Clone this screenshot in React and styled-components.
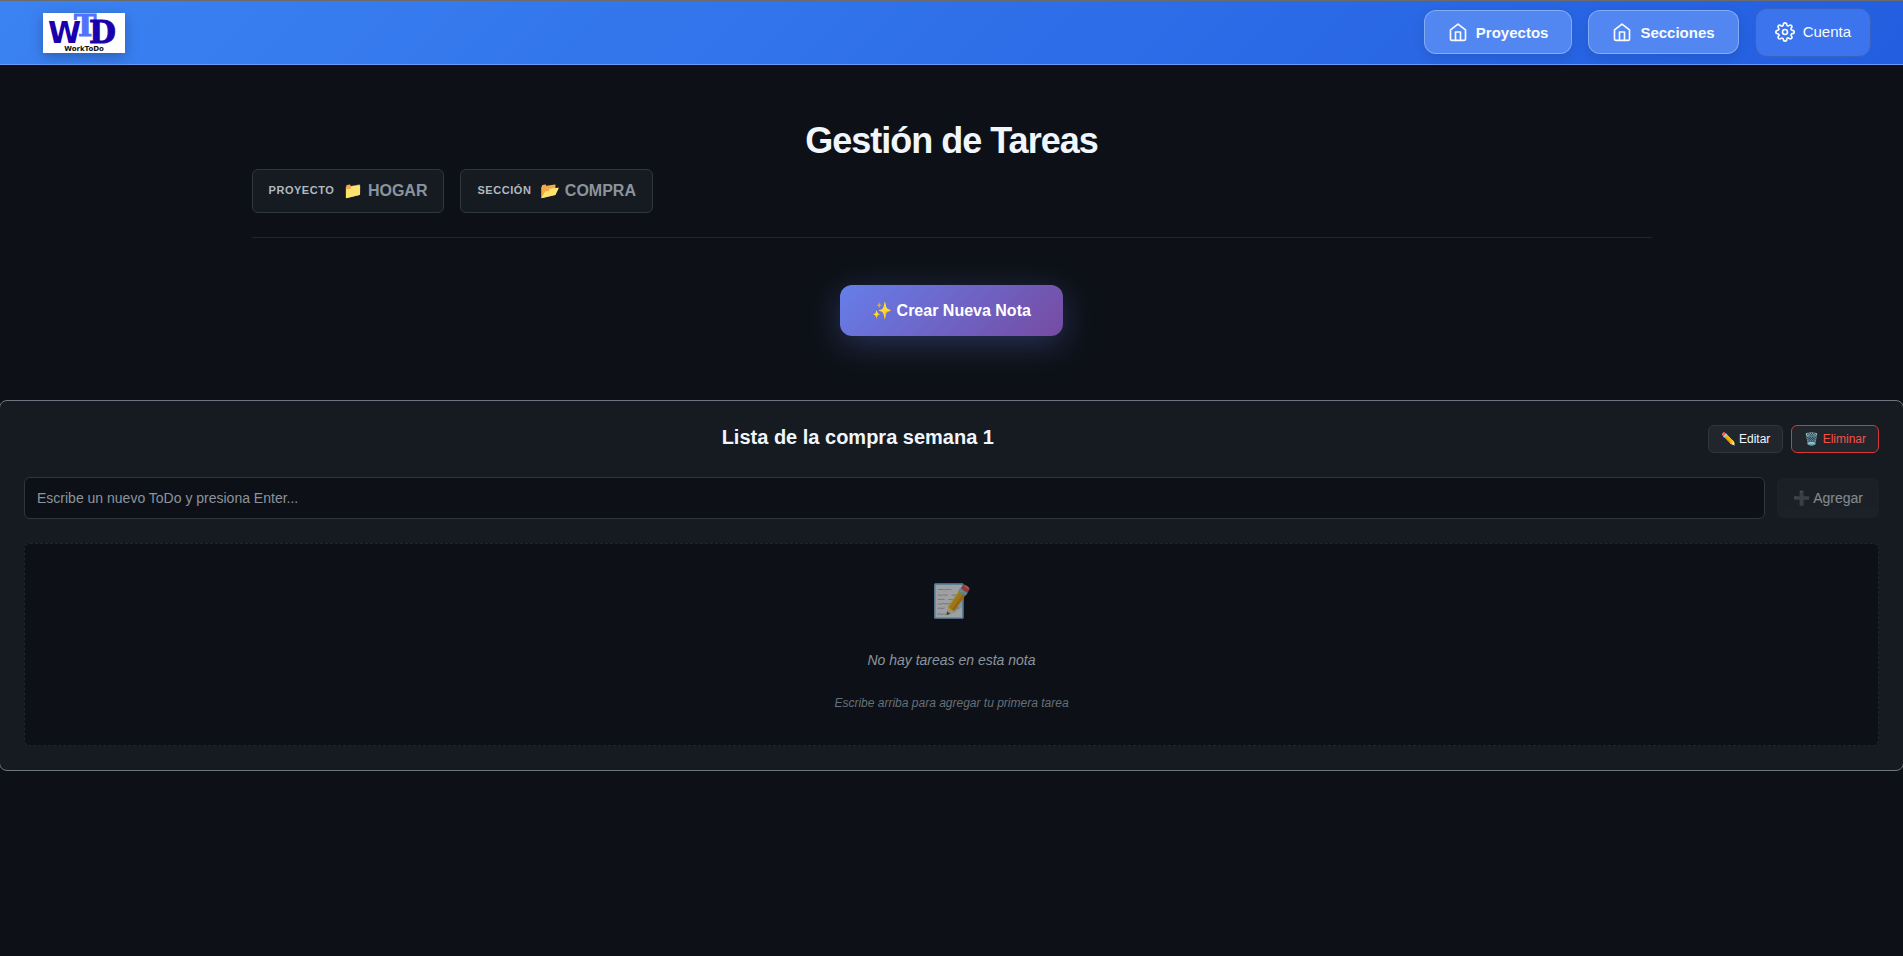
import React, { useState } from "react";
import styled, { createGlobalStyle, css } from "styled-components";

const GlobalStyle = createGlobalStyle`
  *, *::before, *::after { box-sizing: border-box; }
  body {
    margin: 0;
    overflow-x: hidden;
    color: #f0f6fc;
    font-family: "Liberation Sans", Arial, sans-serif;
    font-size: 16px;
  }
  button, input { font-family: inherit; }
`;

const Page = styled.div`
  min-height: 100vh;
  background: #0d1117;
`;

const Header = styled.header`
  display: flex;
  align-items: center;
  justify-content: space-between;
  height: 65px;
  padding: 0 32px 0 43px;
  background: linear-gradient(135deg, #3b82f2 0%, #235ee0 100%);
  border-top: 1px solid #6b6b6b;
  border-bottom: 1px solid #6a9af5;
`;

const LogoLink = styled.a`
  display: block;
  height: 40px;
  box-shadow: 0 4px 12px rgba(0, 0, 0, 0.25);

  svg { display: block; }
`;

const Nav = styled.nav`
  display: flex;
  align-items: center;
  gap: 16px;
  padding-bottom: 1px;
`;

const NavButton = styled.button`
  display: flex;
  align-items: center;
  gap: 8px;
  height: 44px;
  padding: 0 23px;
  border: 1px solid rgba(255, 255, 255, 0.3);
  border-radius: 12px;
  background: #5287f1;
  box-shadow: 0 4px 12px rgba(0, 0, 0, 0.1);
  color: #f8fafc;
  font-size: 15px;
  font-weight: 600;
  cursor: pointer;

  ${({ $quiet }) => $quiet && css`
    height: 49px;
    padding: 0 19px 1px;
    border-color: #3862c0;
    background: #3b74ed;
    box-shadow: none;
    font-weight: 400;
  `}
`;

const Icon = styled.svg.attrs({
  viewBox: "0 0 24 24",
  width: 20,
  height: 20,
  fill: "none",
  stroke: "currentColor",
  strokeWidth: 2,
  strokeLinecap: "round",
  strokeLinejoin: "round",
  "aria-hidden": true,
})``;

const Intro = styled.section`
  max-width: 1400px;
  margin: 0 auto;
  padding-top: 54px;
`;

const Title = styled.h1`
  margin: 0;
  font-size: 36px;
  font-weight: 700;
  line-height: 44px;
  letter-spacing: -1px;
  text-align: center;
`;

const Crumbs = styled.div`
  display: flex;
  gap: 16px;
  margin-top: 6px;
  padding-bottom: 24px;
  border-bottom: 1px solid #21262d;
`;

const Crumb = styled.div`
  display: flex;
  align-items: center;
  gap: 9px;
  height: 44px;
  padding: 0 16px 2px;
  border: 1px solid #30363d;
  border-radius: 6px;
  background: #161b22;
`;

const CrumbLabel = styled.span`
  color: #b1b8c0;
  font-size: 11px;
  font-weight: 600;
  letter-spacing: 0.05em;
  text-transform: uppercase;
`;

const CrumbValue = styled.span`
  color: #8b949e;
  font-weight: 600;
  text-transform: uppercase;
`;

const CreateRow = styled.div`
  display: flex;
  justify-content: center;
  padding: 47px 0 64px;
`;

const CreateButton = styled.button`
  height: 51px;
  padding: 0 32px;
  border: 0;
  border-radius: 12px;
  background: linear-gradient(135deg, #667eea 0%, #764ba2 100%);
  box-shadow: 0 8px 32px rgba(102, 126, 234, 0.3);
  color: #fff;
  font-size: 16px;
  font-weight: 600;
  cursor: pointer;
`;

const Note = styled.article`
  margin: 0 -1px;
  padding: 24px;
  border: 1px solid #6e7681;
  border-radius: 8px;
  background: #161b22;
`;

const NoteHeader = styled.div`
  display: flex;
  align-items: flex-start;
  gap: 16px;
  height: 52px;
`;

const NoteTitle = styled.h2`
  flex: 1;
  margin: 0;
  font-size: 20px;
  font-weight: 600;
  line-height: 24px;
  text-align: center;
`;

const Actions = styled.div`
  display: flex;
  gap: 8px;
`;

const SmallButton = styled.button`
  height: 28px;
  padding: 0 12px;
  border: 1px solid ${({ $danger }) => ($danger ? "#da3633" : "#30363d")};
  border-radius: 6px;
  background: #21262d;
  color: ${({ $danger }) => ($danger ? "#f85149" : "#f0f6fc")};
  font-size: 12px;
  cursor: pointer;
`;

const AddForm = styled.form`
  display: flex;
  align-items: center;
  gap: 12px;
`;

const TodoInput = styled.input`
  flex: 1;
  min-width: 0;
  height: 42px;
  padding: 0 12px;
  border: 1px solid #30363d;
  border-radius: 6px;
  outline: none;
  background: #0d1117;
  color: #f0f6fc;
  font-size: 14px;

  &::placeholder { color: #8b949e; opacity: 1; }
`;

const AddButton = styled.button`
  height: 40px;
  padding: 0 16px;
  border: 0;
  border-radius: 6px;
  background: #21262d;
  color: #f0f6fc;
  font-size: 14px;
  opacity: 0.5;
`;

const Empty = styled.div`
  display: flex;
  flex-direction: column;
  align-items: center;
  margin-top: 24px;
  padding: 32px 0;
  border: 1px dashed #21262d;
  border-radius: 6px;
  background: #0d1117;
  font-style: italic;
`;

const EmptyIcon = styled.span`
  font-size: 32px;
  font-style: normal;
  line-height: 50px;
  opacity: 0.6;
`;

const EmptyText = styled.p`
  margin: 22px 0 0;
  color: #8b949e;
  font-size: 14px;
  line-height: 24px;
`;

const EmptyHint = styled.p`
  margin: 21px 0 0;
  color: #686f79;
  font-size: 12px;
  line-height: 20px;
`;

function Logo() {
  return (
    <svg width="82" height="40" viewBox="0 0 82 40" role="img" aria-label="WorkToDo">
      <rect width="82" height="40" fill="#fff" />
      <text x="5" y="30" fontSize="30" fontWeight="700" fontFamily="'DejaVu Sans', sans-serif" fill="#1a00ad">
        W
        <tspan x="31" y="23" fontFamily="'DejaVu Serif', serif" fill="#5271ff" stroke="#5271ff">T</tspan>
        <tspan x="46" y="30" fontSize="31" fontFamily="'DejaVu Serif', serif" stroke="#1a00ad">D</tspan>
      </text>
      <text x="41" y="38" fontSize="7" fontWeight="700" fontFamily="'DejaVu Sans', sans-serif" fill="#111" textAnchor="middle">
        WorkToDo
      </text>
    </svg>
  );
}

function HomeIcon() {
  return (
    <Icon>
      <path d="M3 9.5 12 2.5l9 7V20a2 2 0 0 1-2 2H5a2 2 0 0 1-2-2z" />
      <path d="M9 22V12h6v10" />
    </Icon>
  );
}

function GearIcon() {
  return (
    <Icon>
      <circle cx="12" cy="12" r="3" />
      <path d="M19.4 15a1.65 1.65 0 0 0 .33 1.82l.06.06a2 2 0 0 1 0 2.83 2 2 0 0 1-2.83 0l-.06-.06a1.65 1.65 0 0 0-1.82-.33 1.65 1.65 0 0 0-1 1.51V21a2 2 0 0 1-2 2 2 2 0 0 1-2-2v-.09A1.65 1.65 0 0 0 9 19.4a1.65 1.65 0 0 0-1.82.33l-.06.06a2 2 0 0 1-2.83 0 2 2 0 0 1 0-2.83l.06-.06a1.65 1.65 0 0 0 .33-1.82 1.65 1.65 0 0 0-1.51-1H3a2 2 0 0 1-2-2 2 2 0 0 1 2-2h.09A1.65 1.65 0 0 0 4.6 9a1.65 1.65 0 0 0-.33-1.82l-.06-.06a2 2 0 0 1 0-2.83 2 2 0 0 1 2.83 0l.06.06a1.65 1.65 0 0 0 1.82.33H9a1.65 1.65 0 0 0 1-1.51V3a2 2 0 0 1 2-2 2 2 0 0 1 2 2v.09a1.65 1.65 0 0 0 1 1.51 1.65 1.65 0 0 0 1.82-.33l.06-.06a2 2 0 0 1 2.83 0 2 2 0 0 1 0 2.83l-.06.06a1.65 1.65 0 0 0-.33 1.82V9a1.65 1.65 0 0 0 1.51 1H21a2 2 0 0 1 2 2 2 2 0 0 1-2 2h-.09a1.65 1.65 0 0 0-1.51 1z" />
    </Icon>
  );
}

export default function App() {
  const [todo, setTodo] = useState("");

  return (
    <>
      <GlobalStyle />
      <Page>
        <Header>
          <LogoLink href="#"><Logo /></LogoLink>
          <Nav>
            <NavButton type="button"><HomeIcon />Proyectos</NavButton>
            <NavButton type="button"><HomeIcon />Secciones</NavButton>
            <NavButton type="button" $quiet><GearIcon />Cuenta</NavButton>
          </Nav>
        </Header>
        <main>
          <Intro>
            <Title>Gestión de Tareas</Title>
            <Crumbs>
              <Crumb>
                <CrumbLabel>Proyecto</CrumbLabel>
                <CrumbValue>📁 Hogar</CrumbValue>
              </Crumb>
              <Crumb>
                <CrumbLabel>Sección</CrumbLabel>
                <CrumbValue>📂 Compra</CrumbValue>
              </Crumb>
            </Crumbs>
            <CreateRow>
              <CreateButton type="button">✨ Crear Nueva Nota</CreateButton>
            </CreateRow>
          </Intro>
          <Note>
            <NoteHeader>
              <NoteTitle>Lista de la compra semana 1</NoteTitle>
              <Actions>
                <SmallButton type="button">✏️ Editar</SmallButton>
                <SmallButton type="button" $danger>🗑️ Eliminar</SmallButton>
              </Actions>
            </NoteHeader>
            <AddForm onSubmit={(e) => e.preventDefault()}>
              <TodoInput
                aria-label="Nuevo ToDo"
                placeholder="Escribe un nuevo ToDo y presiona Enter..."
                value={todo}
                onChange={(e) => setTodo(e.target.value)}
              />
              <AddButton type="submit" disabled={!todo.trim()}>➕ Agregar</AddButton>
            </AddForm>
            <Empty>
              <EmptyIcon>📝</EmptyIcon>
              <EmptyText>No hay tareas en esta nota</EmptyText>
              <EmptyHint>Escribe arriba para agregar tu primera tarea</EmptyHint>
            </Empty>
          </Note>
        </main>
      </Page>
    </>
  );
}
